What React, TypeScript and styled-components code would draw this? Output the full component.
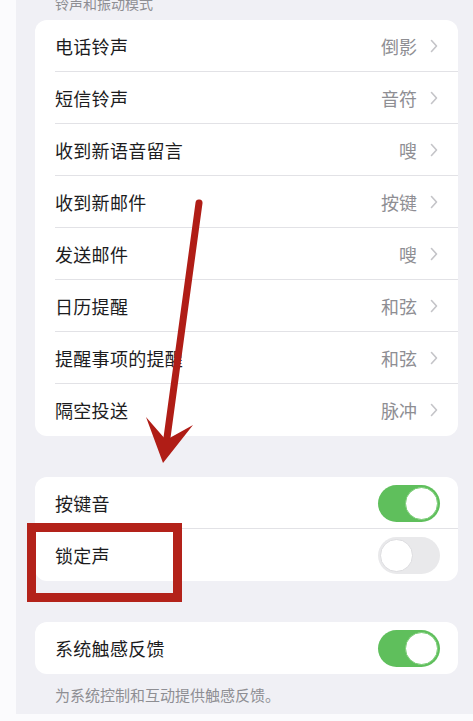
import styled, { createGlobalStyle } from 'styled-components'

type Tone = { value?: string; toggle?: boolean; on?: boolean }

const ringtones = [
  { label: '电话铃声', value: '倒影' },
  { label: '短信铃声', value: '音符' },
  { label: '收到新语音留言', value: '嗖' },
  { label: '收到新邮件', value: '按键' },
  { label: '发送邮件', value: '嗖' },
  { label: '日历提醒', value: '和弦' },
  { label: '提醒事项的提醒', value: '和弦' },
  { label: '隔空投送', value: '脉冲' },
]

const GlobalStyle = createGlobalStyle`
  body {
    margin: 0;
    background: #fbfbfd;
    font-family: 'Noto Sans CJK SC', 'Noto Sans', sans-serif;
  }
`

const Chevron = () => (
  <svg width='8' height='14' viewBox='0 0 8 14'>
    <path d='M1.5 1.5 L6.5 7 L1.5 12.5' fill='none' stroke='#c4c4c8' strokeWidth='1.6' strokeLinecap='round' strokeLinejoin='round' />
  </svg>
)

const App = () => {
  return (
    <Root>
      <GlobalStyle />
      <Page>
        <SectionHeader>铃声和振动模式</SectionHeader>
        <Card>
          {ringtones.map((item, i) => (
            <Row key={item.label} last={i === ringtones.length - 1}>
              <Label>{item.label}</Label>
              <Value>{item.value}</Value>
              <Chevron />
            </Row>
          ))}
        </Card>

        <Card spaced>
          <Row>
            <Label>按键音</Label>
            <Switch on />
          </Row>
          <Row last>
            <Label>锁定声</Label>
            <Switch />
          </Row>
        </Card>

        <Card spaced>
          <Row last>
            <Label>系统触感反馈</Label>
            <Switch on />
          </Row>
        </Card>
        <Footnote>为系统控制和互动提供触感反馈。</Footnote>
      </Page>

      <Highlight />
      <Arrow viewBox='0 0 473 721'>
        <line x1='199' y1='203' x2='166' y2='445' stroke='#b01d16' strokeWidth='7' strokeLinecap='round' />
        <polygon points='146,417 166,440 193,425 163,463' fill='#b01d16' />
      </Arrow>
    </Root>
  )
}

export default App

const Root = styled.div`
  position: relative;
  width: 473px;
  height: 721px;
  overflow: hidden;
`
const Page = styled.div`
  margin-left: 16px;
  height: 100%;
  background: #f0f0f5;
  padding: 0 15px 0 19px;
  box-sizing: border-box;
`
const SectionHeader = styled.div`
  margin-top: -7px;
  height: 21px;
  line-height: 21px;
  margin-bottom: 6px;
  padding-left: 20px;
  font-size: 14px;
  color: #8e8e93;
`
const Card = styled.div<{ spaced?: boolean }>`
  background: #ffffff;
  border-radius: 12px;
  margin-top: ${(props) => (props.spaced ? '41px' : '0')};
  overflow: hidden;
`
const Row = styled.div<{ last?: boolean }>`
  position: relative;
  display: flex;
  align-items: center;
  height: 52px;
  padding: 0 20px 0 20px;
  ${(props) =>
    !props.last &&
    `
    &::after {
      content: '';
      position: absolute;
      left: 20px;
      right: 0;
      bottom: 0;
      height: 1px;
      background: #e2e2e6;
    }
  `}
`
const Label = styled.span`
  flex: 1;
  font-size: 18px;
  color: #1c1c1e;
  letter-spacing: 0.3px;
`
const Value = styled.span`
  font-size: 18px;
  color: #8e8e93;
  margin-right: 13px;
`
const Switch = styled.div<{ on?: boolean }>`
  position: relative;
  width: 62px;
  height: 37px;
  margin-right: -2px;
  border-radius: 19px;
  background: ${(props) => (props.on ? '#5fbf5c' : '#e9e9eb')};
  &::after {
    content: '';
    position: absolute;
    top: 2px;
    left: ${(props) => (props.on ? '27px' : '2px')};
    width: 33px;
    height: 33px;
    border-radius: 50%;
    background: #ffffff;
    box-sizing: border-box;
    border: 1px solid ${(props) => (props.on ? '#7ccc78' : '#dcdcdf')};
  }
`
const Footnote = styled.div`
  padding: 10px 0 0 20px;
  font-size: 15px;
  color: #8e8e93;
`
const Highlight = styled.div`
  position: absolute;
  left: 27px;
  top: 523px;
  width: 155px;
  height: 79px;
  border: 9px solid #b3221a;
  box-sizing: border-box;
`
const Arrow = styled.svg`
  position: absolute;
  left: 0;
  top: 0;
  width: 473px;
  height: 721px;
  pointer-events: none;
`
